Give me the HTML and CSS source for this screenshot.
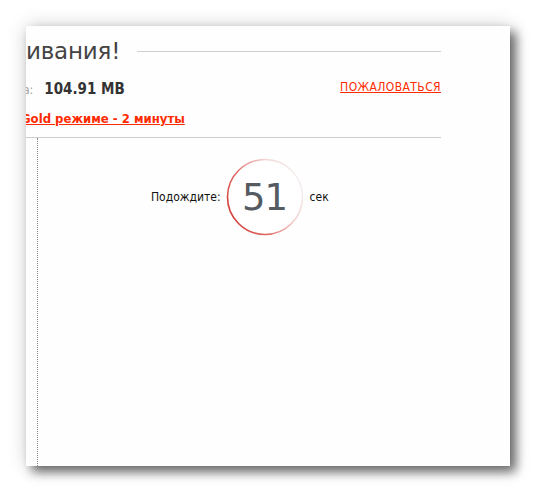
FILE: index.html
```html
<!DOCTYPE html>
<html lang="ru">
<head>
<meta charset="utf-8">
<title>Скачивание</title>
<link rel="stylesheet" href="styles.css">
</head>
<body>
<div class="window">
  <div class="content">
    <div class="title-row">
      <h1 class="title">ивания!</h1>
      <div class="title-line"></div>
    </div>
    <div class="info-row">
      <div class="size"><span class="size-label">а:</span><span class="size-value">104.91 MB</span></div>
      <a class="complain" href="#">ПОЖАЛОВАТЬСЯ</a>
    </div>
    <div class="gold-row"><a class="gold" href="#">Gold режиме - 2 минуты</a></div>
  </div>
  <div class="divider"></div>
  <div class="body-area">
    <div class="countdown">
      <span class="wait">Подождите:</span>
      <div class="timer">
        <svg class="ring" width="78" height="78" viewBox="0 0 78 78">
          <defs>
            <linearGradient id="rg" x1="0" y1="0.75" x2="1" y2="0.25">
              <stop offset="0" stop-color="#d23a36"/>
              <stop offset="0.3" stop-color="#df6662"/>
              <stop offset="0.7" stop-color="#f3d3d1"/>
              <stop offset="1" stop-color="#f3f3f3"/>
            </linearGradient>
          </defs>
          <circle cx="39" cy="39" r="37.5" fill="#fff" stroke="url(#rg)" stroke-width="1.6"/>
        </svg>
        <span class="num">51</span>
      </div>
      <span class="sec">сек</span>
    </div>
  </div>
</div>
</body>
</html>
```
FILE: styles.css
```css
html, body {
  margin: 0;
  padding: 0;
  background: #fff;
}
body {
  font-family: "DejaVu Sans Condensed", "DejaVu Sans", Verdana, sans-serif;
  width: 536px;
  height: 490px;
  overflow: hidden;
}
.window {
  margin: 26px 0 0 26px;
  width: 484px;
  height: 440px;
  background: #fefefe;
  overflow: hidden;
  box-shadow: 6px 6px 10px rgba(0, 0, 0, 0.55), 0 0 18px rgba(0, 0, 0, 0.18);
  display: flex;
  flex-direction: column;
}
.content {
  padding: 12px 69px 0 0;
}
.title-row {
  display: flex;
  align-items: center;
  height: 26px;
}
.title {
  margin: 0;
  font-family: "DejaVu Sans", Verdana, sans-serif;
  font-weight: normal;
  font-size: 23px;
  line-height: 26px;
  color: #444;
  letter-spacing: -0.2px;
  white-space: nowrap;
}
.title-line {
  flex: 1;
  border-top: 1px solid #cfcfcf;
  margin-left: 17px;
  margin-top: 1px;
}
.info-row {
  display: flex;
  justify-content: space-between;
  align-items: flex-start;
  margin-top: 16px;
  height: 18px;
}
.size {
  white-space: nowrap;
  line-height: 18px;
}
.size-label {
  color: #a0a0a0;
  font-size: 12px;
  margin-left: -3px;
  margin-right: 11px;
}
.size-value {
  font-weight: bold;
  font-size: 15px;
  color: #333;
}
.complain {
  font-size: 12px;
  letter-spacing: 0.4px;
  line-height: 18px;
  margin-top: -2px;
  color: #ff2a00;
  text-decoration: underline;
}
.gold-row {
  margin-top: 12px;
  height: 16px;
  line-height: 16px;
}
.gold {
  display: inline-block;
  margin-left: -5px;
  font-weight: bold;
  font-size: 13px;
  color: #ff2a00;
  text-decoration: underline;
  white-space: nowrap;
}
.divider {
  margin-top: 11px;
  margin-right: 69px;
  border-top: 1px solid #cdcdcd;
}
.body-area {
  flex: 1;
  margin-left: 11px;
  border-left: 1px dotted #8a8a8a;
}
.countdown {
  display: flex;
  align-items: center;
  margin-top: 20px;
  margin-left: 113px;
}
.wait, .sec {
  font-size: 12px;
  color: #111;
}
.timer {
  position: relative;
  width: 78px;
  height: 78px;
  margin: 0 6px 0 5px;
}
.ring {
  display: block;
}
.num {
  position: absolute;
  inset: 0;
  display: flex;
  align-items: center;
  justify-content: center;
  font-family: "DejaVu Sans", Verdana, sans-serif;
  font-size: 37px;
  color: #555b60;
  letter-spacing: -1px;
}
```
